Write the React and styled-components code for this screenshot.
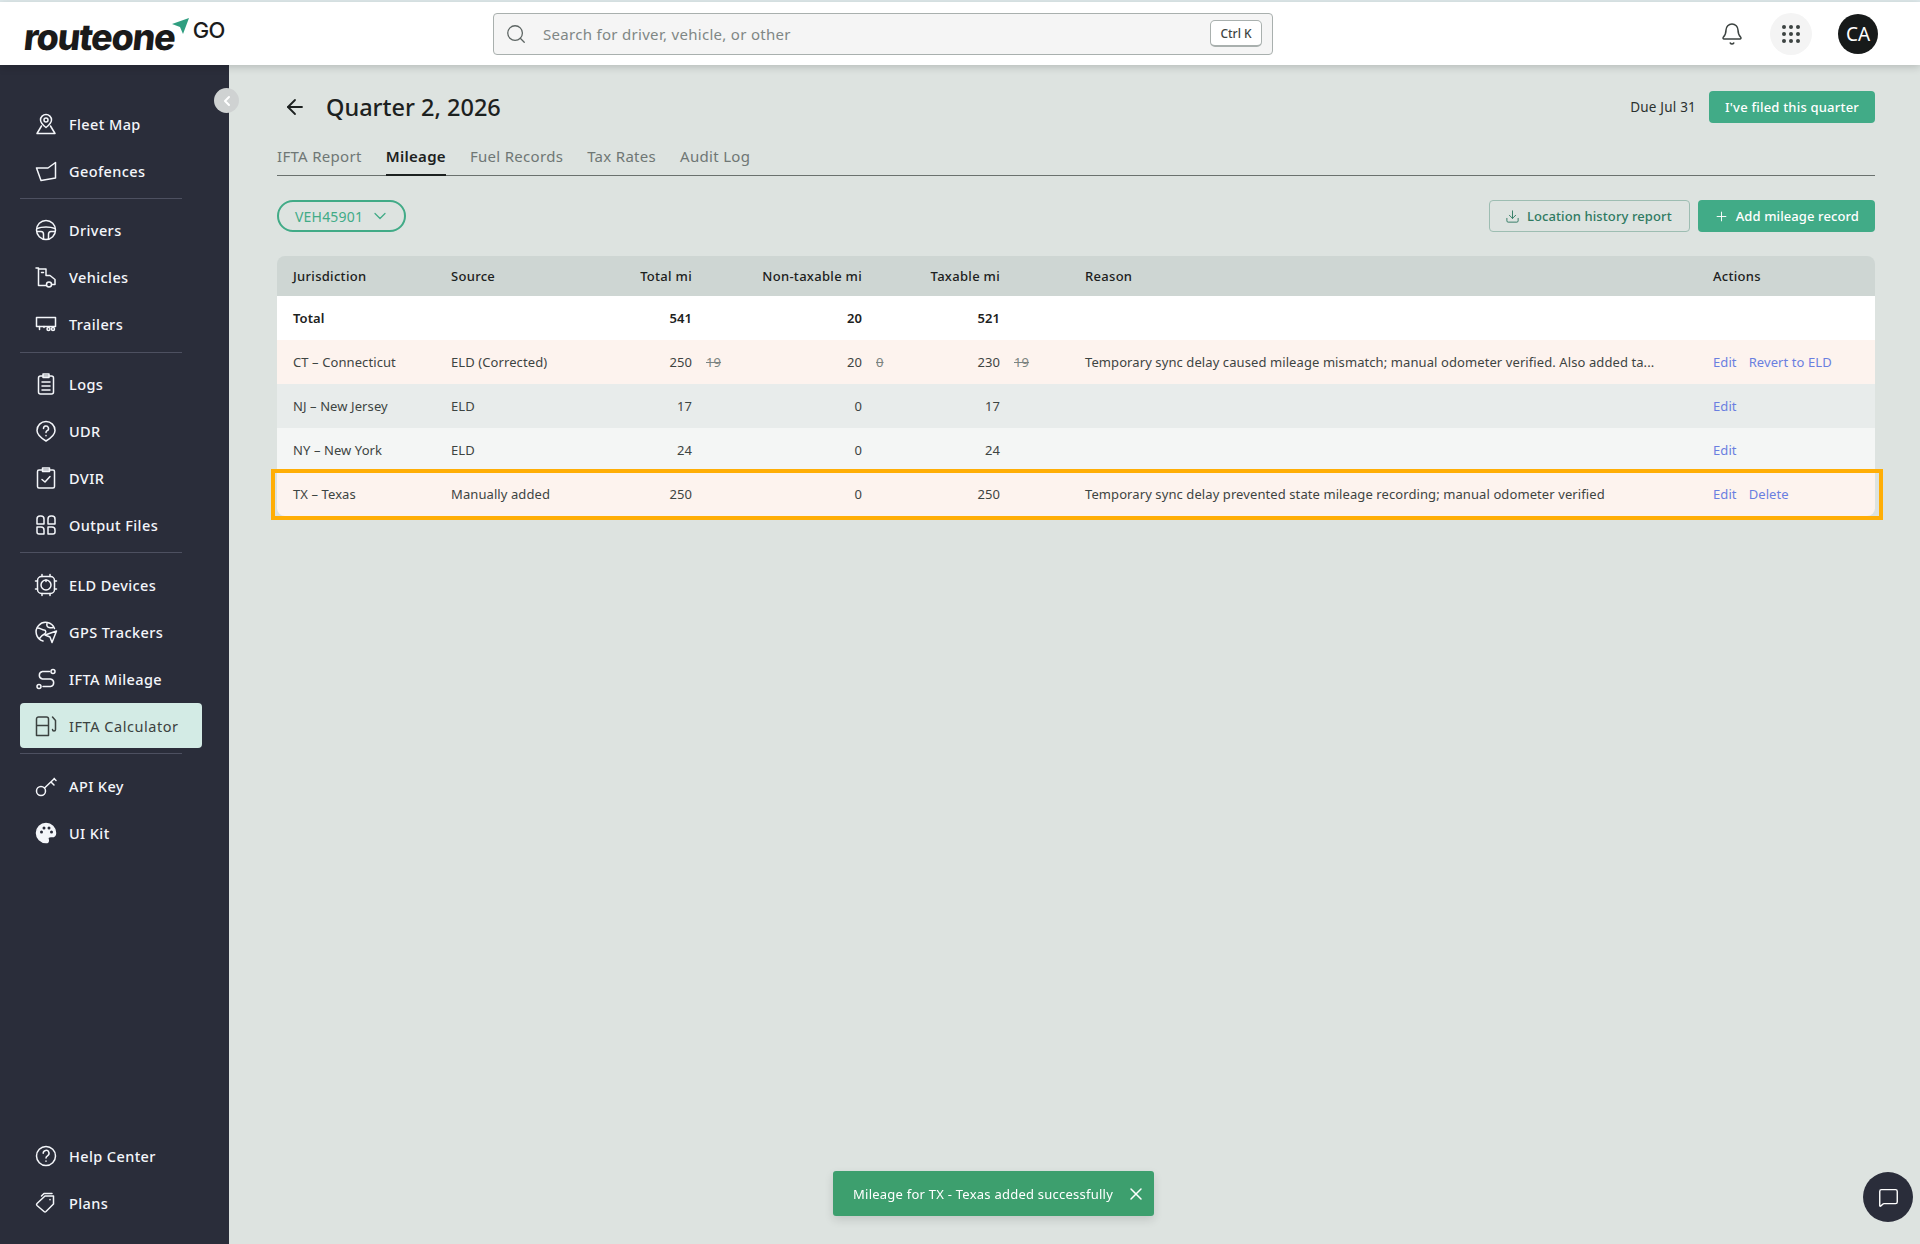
import React from 'react';
import styled, { createGlobalStyle } from 'styled-components';
import { ArrowLeft, Bell, ChevronDown, ChevronLeft, Download, MessageSquare, Plus, Search, X } from 'lucide-react';

const GlobalStyle = createGlobalStyle`
  html, body {
    margin: 0;
    height: 1244px;
    overflow: hidden;
    font-family: "Noto Sans", "Open Sans", sans-serif;
    background: #dde3e0;
  }
  * { box-sizing: border-box; }
`;

const Page = styled.div`
  height: 1244px;
  display: flex;
  flex-direction: column;
  border-top: 2px solid #dfeaec;
`;

const Header = styled.header`
  height: 63px;
  flex: none;
  background: #fff;
  display: flex;
  align-items: center;
  padding: 0 42px 0 24px;
  box-shadow: 0 2px 8px rgba(0, 0, 0, 0.18);
  position: relative;
  z-index: 2;
`;

const Logo = styled.div`
  width: 469px;
  flex: none;
  display: flex;
  align-items: flex-start;
  height: 40px;
`;

const LogoWord = styled.span`
  font-family: Inter, sans-serif;
  font-weight: 800;
  font-size: 36px;
  line-height: 40px;
  letter-spacing: -1.3px;
  color: #1a1a1a;
  display: inline-block;
  transform: skewX(-6deg);
  margin-top: 3px;
`;

const LogoPlane = styled.svg`
  flex: none;
  margin: 4px 0 0 -3px;
`;

const LogoGo = styled.span`
  font-family: Inter, sans-serif;
  font-weight: 500;
  font-size: 22px;
  line-height: 26px;
  color: #1c1c1c;
  letter-spacing: -0.6px;
  margin: 3px 0 0 4px;
`;

const SearchBox = styled.div`
  width: 780px;
  height: 42px;
  flex: none;
  background: #f5f5f5;
  border: 1px solid #a9b0ae;
  border-radius: 4px;
  display: flex;
  align-items: center;
  padding: 0 10px 0 11px;
  color: #5d6563;
`;

const Placeholder = styled.span`
  flex: 1;
  margin-left: 16px;
  font-size: 15px;
  letter-spacing: 0.3px;
  color: #808785;
`;

const Kbd = styled.span`
  width: 52px;
  height: 27px;
  background: #fff;
  border: 1px solid #a9b0ae;
  border-bottom-width: 2px;
  border-radius: 5px;
  display: flex;
  align-items: center;
  justify-content: center;
  font-size: 12px;
  font-weight: 500;
  color: #3d4442;
`;

const HeaderRight = styled.div`
  margin-left: auto;
  display: flex;
  align-items: center;
  color: #3c4341;
`;

const GridButton = styled.div`
  width: 42px;
  height: 42px;
  margin-left: 26px;
  border-radius: 50%;
  background: #f4f4f4;
  display: flex;
  align-items: center;
  justify-content: center;
`;

const Avatar = styled.div`
  width: 40px;
  height: 40px;
  margin-left: 26px;
  border-radius: 50%;
  background: #171a1a;
  color: #fff;
  font-size: 19px;
  display: flex;
  align-items: center;
  justify-content: center;
`;

const Body = styled.div`
  flex: 1;
  display: flex;
  min-height: 0;
`;

const Sidebar = styled.aside`
  width: 229px;
  flex: none;
  background: #2a2d3a;
  display: flex;
  flex-direction: column;
  justify-content: space-between;
  padding: 35px 0 17.5px 20px;
  position: relative;
`;

const NavList = styled.div`
  display: flex;
  flex-direction: column;
`;

const CollapseButton = styled.div`
  position: absolute;
  top: 23px;
  right: -10px;
  width: 25px;
  height: 25px;
  border-radius: 50%;
  background: #cfd2d2;
  color: #fff;
  display: flex;
  align-items: center;
  justify-content: center;
`;

const NavItem = styled.div`
  width: 182px;
  height: 45px;
  margin: 1px 0;
  padding-left: 14px;
  display: flex;
  align-items: center;
  gap: 11px;
  border-radius: 4px;
  font-size: 14.5px;
  letter-spacing: ${(p) => (p.$active ? '0.55px' : '0.4px')};
  font-weight: ${(p) => (p.$active ? 400 : 500)};
  color: ${(p) => (p.$active ? '#3b4240' : '#f4f6fa')};
  background: ${(p) => (p.$active ? '#d3ebe5' : 'transparent')};
`;

const NavDivider = styled.div`
  width: 162px;
  height: 1px;
  background: #4d5060;
  margin: 3.75px 0 8px;
`;

const IconSvg = styled.svg`
  width: 24px;
  height: 24px;
  flex: none;
  fill: none;
  stroke: currentColor;
  stroke-width: 1.5;
  stroke-linecap: round;
  stroke-linejoin: round;
`;

const Main = styled.main`
  flex: 1;
  min-width: 0;
  padding: 26px 45px 0 48px;
`;

const TitleRow = styled.div`
  height: 32px;
  display: flex;
  align-items: center;
`;

const BackIcon = styled(ArrowLeft)`
  margin-left: 6px;
  color: #1c2120;
`;

const Title = styled.h1`
  margin: 0 0 0 19px;
  font-size: 23.5px;
  font-weight: 500;
  color: #1c2120;
`;

const DueText = styled.span`
  margin-left: auto;
  margin-right: 13px;
  font-size: 13.5px;
  letter-spacing: 0.2px;
  color: #2b302f;
`;

const PrimaryButton = styled.button`
  height: 32px;
  padding: 0 16px;
  border: 0;
  border-radius: 4px;
  background: #41ab87;
  color: #fff;
  font: 500 13px "Noto Sans", sans-serif;
  letter-spacing: 0.2px;
  display: flex;
  align-items: center;
  gap: 7px;
`;

const AddButton = styled(PrimaryButton)`
  letter-spacing: 0.1px;
`;

const OutlineButton = styled(PrimaryButton)`
  background: transparent;
  border: 1px solid #9dbdb2;
  color: #2f7a62;
  padding: 0 17px 0 15px;
  letter-spacing: 0.1px;
`;

const Tabs = styled.nav`
  margin-top: 14px;
  height: 39px;
  display: flex;
  gap: 24px;
  border-bottom: 1px solid #6a716e;
`;

const Tab = styled.div`
  height: 39px;
  padding-top: 9px;
  font-size: 15px;
  letter-spacing: 0.3px;
  font-weight: ${(p) => (p.$active ? 600 : 400)};
  color: ${(p) => (p.$active ? '#1c2120' : '#6f7775')};
  border-bottom: ${(p) => (p.$active ? '2px solid #1c2120' : '0')};
`;

const Toolbar = styled.div`
  margin-top: 24px;
  display: flex;
  align-items: center;
  gap: 8px;
`;

const VehiclePill = styled.div`
  width: 129px;
  height: 32px;
  margin-right: auto;
  border: 2px solid #41ab87;
  border-radius: 16px;
  display: flex;
  align-items: center;
  padding-left: 16px;
  gap: 7px;
  font-size: 14px;
  letter-spacing: 0.2px;
  color: #41ab87;
`;

const Table = styled.div`
  margin-top: 24px;
`;

const COLUMNS = '158px 142px 99px 53px 117px 43px 95px 85px 628px 146px';

const HeadRow = styled.div`
  height: 40px;
  padding-left: 16px;
  display: grid;
  grid-template-columns: ${COLUMNS};
  align-items: center;
  background: #ced6d3;
  border-radius: 8px 8px 0 0;
  font-size: 13px;
  font-weight: 500;
  letter-spacing: 0.3px;
  color: #1c2120;
`;

const Row = styled.div`
  height: 44px;
  padding-left: 16px;
  display: grid;
  grid-template-columns: ${COLUMNS};
  align-items: center;
  background: ${(p) => p.$bg};
  font-size: 13px;
  letter-spacing: 0.09px;
  font-weight: ${(p) => (p.$bold ? 600 : 400)};
  color: ${(p) => (p.$bold ? '#1c2120' : '#3d4442')};
  white-space: nowrap;
  position: relative;
  ${(p) => p.$highlight && `
    border-radius: 0 0 8px 8px;
    &::after {
      content: '';
      position: absolute;
      top: -3px;
      bottom: -4px;
      left: -6px;
      right: -8px;
      border: 4px solid #ffae06;
    }
  `}
`;

const Num = styled.span`
  text-align: right;
`;

const Was = styled.s`
  padding-left: 14px;
  color: #7b8381;
`;

const Actions = styled.span`
  display: flex;
  gap: 12px;
  color: #6a7fe0;
`;

const Toast = styled.div`
  position: fixed;
  left: 833px;
  top: 1171px;
  width: 321px;
  height: 45px;
  background: #3d9f6e;
  border-radius: 3px;
  box-shadow: 0 4px 10px rgba(0, 0, 0, 0.12);
  display: flex;
  align-items: center;
  justify-content: space-between;
  padding: 0 8px 0 20px;
  font-size: 13px;
  letter-spacing: 0.24px;
  color: #fff;
`;

const ChatButton = styled.div`
  position: fixed;
  left: 1863px;
  top: 1172px;
  width: 50px;
  height: 50px;
  border-radius: 50%;
  background: #2a2d3a;
  color: #fff;
  display: flex;
  align-items: center;
  justify-content: center;
`;

const icons = {
  fleet: (
    <>
      <path d="M12 2.500a5.500 5.500 0 0 1 5.500 5.500c0 3-3 5.500-5.500 7.500-2.500-2-5.500-4.500-5.500-7.500A5.500 5.500 0 0 1 12 2.500z" />
      <circle cx="12" cy="8" r="2" />
      <path d="M7.500 14 3 21.500h18L16.500 14" />
    </>
  ),
  geo: <path d="M2.500 9H14l7.500-5.500V19L7 21.500z" />,
  wheel: (
    <>
      <circle cx="12" cy="12" r="9.500" />
      <path d="M3 10.500C8 8.500 16 8.500 21 10.500" />
      <path d="M2.800 13.500H7c1.500 0 2.500 1.300 2.500 2.800V21" />
      <path d="M21.200 13.500H17c-1.500 0-2.500 1.300-2.500 2.800V21" />
    </>
  ),
  vehicle: (
    <>
      <path d="M2 3h2.500v17.500H12" />
      <path d="M4.500 4H12v6.500h4l5 4v5h-3" />
      <path d="M7.500 7.500h2" />
      <circle cx="15" cy="19.500" r="2.500" />
    </>
  ),
  trailer: (
    <>
      <path d="M2.500 5.500h19v9h-19z" />
      <path d="M5.500 14.500v3M10 14.500v1" />
      <circle cx="14.500" cy="17" r="1.500" />
      <circle cx="19" cy="17" r="1.500" />
    </>
  ),
  logs: (
    <>
      <rect x="4.500" y="4" width="15" height="18" rx="2" />
      <path d="M9 2h6v3.500H9zM8 10h8M8 14h8M8 18h8" />
    </>
  ),
  udr: (
    <>
      <path d="M12 2.500a9 9 0 0 1 9 9c0 4.500-4 7.500-9 10.500-5-3-9-6-9-10.500a9 9 0 0 1 9-9z" />
      <path d="M9.500 9.500a2.500 2.500 0 1 1 3.700 2.200c-.8.500-1.200 1-1.200 1.800M12 16.500v.3" />
    </>
  ),
  dvir: (
    <>
      <rect x="3.500" y="4" width="17" height="18" rx="1.500" />
      <path d="M8.500 2h7v3.500h-7zM8 13.500l3 2.500 5-5.500" />
    </>
  ),
  output: (
    <>
      <path d="M3 11V6a3 3 0 0 1 3-3h1a3 3 0 0 1 3 3v5z" />
      <path d="M14 11V6a3 3 0 0 1 3-3h1a3 3 0 0 1 3 3v5z" />
      <path d="M3 14v5a2 2 0 0 0 2 2h5v-4a3 3 0 0 0-3-3z" />
      <path d="M14 14v7h5a2 2 0 0 0 2-2v-2a3 3 0 0 0-3-3z" />
    </>
  ),
  eld: (
    <>
      <rect x="3.500" y="3.500" width="17" height="17" rx="4" />
      <circle cx="12" cy="12" r="5" />
      <path d="M8 1.500v2M16 1.500v2M8 20.500v2M16 20.500v2M1.500 8h2M1.500 16h2M20.500 8h2M20.500 16h2M12 7v1.500" />
    </>
  ),
  gps: (
    <>
      <path d="M20.500 8.500A9.500 9.500 0 1 0 9 21" />
      <path d="M3.500 8c3 0 4.500 2 6.500 2s2.500 3 .5 4-3.500 2-5 4.500M13 3.500c-.5 2 0 3.500 2 4s3 .5 4 0" />
      <path d="M22.500 11 18 22.500l-2-5.500-5-2z" />
    </>
  ),
  route: (
    <>
      <circle cx="19" cy="4.500" r="2" />
      <circle cx="5" cy="19.500" r="2" />
      <path d="M15.500 4.500H8.500a3.800 3.800 0 0 0 0 7.500h8a3.800 3.800 0 0 1 0 7.500H9" />
    </>
  ),
  fuel: (
    <>
      <path d="M2.500 21.500V5a2 2 0 0 1 2-2h8a2 2 0 0 1 2 2v16.500zM2.500 11.500h12" />
      <path d="M18.500 3l3 3.500v9a1.500 1.500 0 0 1-3 0" />
    </>
  ),
  key: (
    <>
      <circle cx="7" cy="17" r="4.500" />
      <path d="M10.500 14 20.500 4.500M17 8l3 3M20 4.500l2 2" />
    </>
  ),
  palette: (
    <>
      <path
        fill="currentColor"
        d="M12 2.500a9.500 9.500 0 0 0 0 19c1.600 0 2.300-1 2.300-2.100 0-1.500-1.100-2.100 0-3.200.8-.8 2.100-.6 3.600-.6 2.300 0 3.600-1.500 3.600-3.700C21.500 6.500 17.200 2.500 12 2.500z"
      />
      <g fill="#2a2d3a" stroke="none">
        <circle cx="7.500" cy="11" r="1.500" />
        <circle cx="10" cy="7" r="1.500" />
        <circle cx="15" cy="7" r="1.500" />
        <circle cx="17.500" cy="11" r="1.500" />
      </g>
    </>
  ),
  help: (
    <>
      <circle cx="12" cy="12" r="9.500" />
      <path d="M9.200 9.300a2.900 2.900 0 1 1 4.300 2.500c-1 .6-1.500 1.100-1.500 2.200M12 17v.3" />
    </>
  ),
  plans: (
    <>
      <path d="M3 12.500 11 5h8.500v8L12 20.500a1.500 1.500 0 0 1-2 0l-7-6a1.500 1.500 0 0 1 0-2z" />
      <path d="M7.500 5 10 2.500h8M16 8.500v.3" />
    </>
  ),
};

const NavIcon = ({ name }) => <IconSvg viewBox="0 0 24 24">{icons[name]}</IconSvg>;

const navGroups = [
  [['fleet', 'Fleet Map'], ['geo', 'Geofences']],
  [['wheel', 'Drivers'], ['vehicle', 'Vehicles'], ['trailer', 'Trailers']],
  [['logs', 'Logs'], ['udr', 'UDR'], ['dvir', 'DVIR'], ['output', 'Output Files']],
  [['eld', 'ELD Devices'], ['gps', 'GPS Trackers'], ['route', 'IFTA Mileage'], ['fuel', 'IFTA Calculator']],
];

const rows = [
  { id: 'CT – Connecticut', source: 'ELD (Corrected)', total: '250', totalWas: '19', non: '20', nonWas: '0', tax: '230', taxWas: '19', reason: 'Temporary sync delay caused mileage mismatch; manual odometer verified. Also added ta...', second: 'Revert to ELD', bg: '#fdf3ee' },
  { id: 'NJ – New Jersey', source: 'ELD', total: '17', non: '0', tax: '17', bg: '#e8eceb' },
  { id: 'NY – New York', source: 'ELD', total: '24', non: '0', tax: '24', bg: '#f4f6f5' },
  { id: 'TX – Texas', source: 'Manually added', total: '250', non: '0', tax: '250', reason: 'Temporary sync delay prevented state mileage recording; manual odometer verified', second: 'Delete', bg: '#fdf3ee', highlight: true },
];

const App = () => {
  return (
    <Page>
      <GlobalStyle />
      <Header>
        <Logo>
          <LogoWord>routeone</LogoWord>
          <LogoPlane width="17" height="17" viewBox="0 0 17 17">
            <path d="M0 6 17 0 11 16 8 9z" fill="#2f9e80" />
          </LogoPlane>
          <LogoGo>GO</LogoGo>
        </Logo>
        <SearchBox>
          <Search size={22} strokeWidth={1.4} />
          <Placeholder>Search for driver, vehicle, or other</Placeholder>
          <Kbd>Ctrl K</Kbd>
        </SearchBox>
        <HeaderRight>
          <Bell size={24} strokeWidth={1.5} />
          <GridButton>
            <svg width="20" height="20" viewBox="0 0 20 20" fill="#3c4341">
              {[3, 10, 17].map((y) =>
                [3, 10, 17].map((x) => <circle key={`${x}-${y}`} cx={x} cy={y} r="2" />)
              )}
            </svg>
          </GridButton>
          <Avatar>CA</Avatar>
        </HeaderRight>
      </Header>
      <Body>
        <Sidebar>
          <CollapseButton>
            <ChevronLeft size={16} strokeWidth={3} />
          </CollapseButton>
          <NavList>
            {navGroups.map((group) => (
              <React.Fragment key={group[0][1]}>
                {group.map(([icon, label]) => (
                  <NavItem key={label} $active={label === 'IFTA Calculator'}>
                    <NavIcon name={icon} />
                    {label}
                  </NavItem>
                ))}
                <NavDivider />
              </React.Fragment>
            ))}
            <NavItem>
              <NavIcon name="key" />
              API Key
            </NavItem>
            <NavItem>
              <NavIcon name="palette" />
              UI Kit
            </NavItem>
          </NavList>
          <NavList>
            <NavItem>
              <NavIcon name="help" />
              Help Center
            </NavItem>
            <NavItem>
              <NavIcon name="plans" />
              Plans
            </NavItem>
          </NavList>
        </Sidebar>
        <Main>
          <TitleRow>
            <BackIcon size={24} strokeWidth={1.8} />
            <Title>Quarter 2, 2026</Title>
            <DueText>Due Jul 31</DueText>
            <PrimaryButton>I've filed this quarter</PrimaryButton>
          </TitleRow>
          <Tabs>
            <Tab>IFTA Report</Tab>
            <Tab $active>Mileage</Tab>
            <Tab>Fuel Records</Tab>
            <Tab>Tax Rates</Tab>
            <Tab>Audit Log</Tab>
          </Tabs>
          <Toolbar>
            <VehiclePill>
              VEH45901
              <ChevronDown size={20} strokeWidth={1.5} />
            </VehiclePill>
            <OutlineButton>
              <Download size={15} strokeWidth={1.5} />
              Location history report
            </OutlineButton>
            <AddButton>
              <Plus size={15} strokeWidth={1.5} />
              Add mileage record
            </AddButton>
          </Toolbar>
          <Table>
            <HeadRow>
              <span>Jurisdiction</span>
              <span>Source</span>
              <Num>Total mi</Num>
              <span />
              <Num>Non-taxable mi</Num>
              <span />
              <Num>Taxable mi</Num>
              <span />
              <span>Reason</span>
              <span>Actions</span>
            </HeadRow>
            <Row $bg="#fff" $bold>
              <span>Total</span>
              <span />
              <Num>541</Num>
              <span />
              <Num>20</Num>
              <span />
              <Num>521</Num>
            </Row>
            {rows.map((r) => (
              <Row key={r.id} $bg={r.bg} $highlight={r.highlight}>
                <span>{r.id}</span>
                <span>{r.source}</span>
                <Num>{r.total}</Num>
                <span>{r.totalWas && <Was>{r.totalWas}</Was>}</span>
                <Num>{r.non}</Num>
                <span>{r.nonWas && <Was>{r.nonWas}</Was>}</span>
                <Num>{r.tax}</Num>
                <span>{r.taxWas && <Was>{r.taxWas}</Was>}</span>
                <span>{r.reason}</span>
                <Actions>
                  <span>Edit</span>
                  {r.second && <span>{r.second}</span>}
                </Actions>
              </Row>
            ))}
          </Table>
        </Main>
      </Body>
      <Toast>
        Mileage for TX - Texas added successfully
        <X size={20} strokeWidth={1.8} />
      </Toast>
      <ChatButton>
        <MessageSquare size={21} strokeWidth={1.6} />
      </ChatButton>
    </Page>
  );
};

export default App;
